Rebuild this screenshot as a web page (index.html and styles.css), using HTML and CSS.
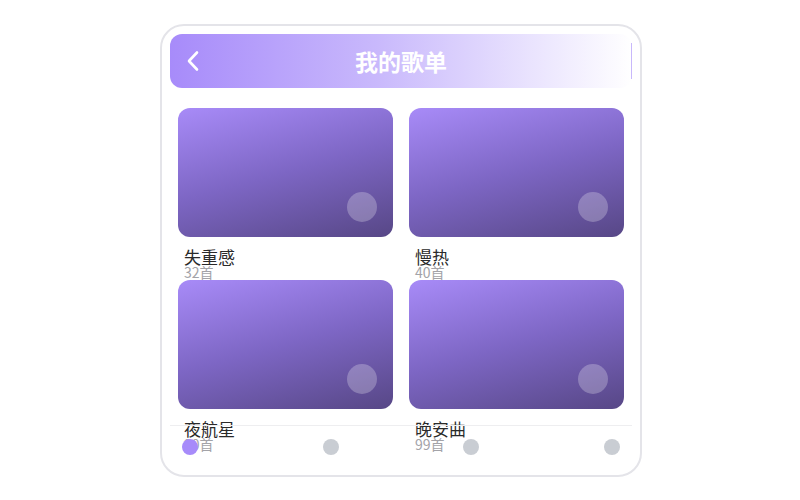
FILE: index.html
```html
<!DOCTYPE html>
<html lang="zh">
<head>
<meta charset="utf-8">
<title>我的歌单</title>
<link rel="stylesheet" href="styles.css">
</head>
<body>
<div class="phone">
  <header class="topbar">
    <span class="back">
      <svg width="14" height="22" viewBox="0 0 14 22"><path d="M11 2.5 L3 11 L11 19.5" fill="none" stroke="#fff" stroke-width="2.6" stroke-linecap="round" stroke-linejoin="round"/></svg>
    </span>
    <h1 class="title">我的歌单</h1>
    <span class="edge"></span>
  </header>
  <main class="list">
    <div class="item">
      <div class="cover"><span class="play"></span></div>
      <div class="name">失重感</div>
      <div class="count">32首</div>
    </div>
    <div class="item">
      <div class="cover"><span class="play"></span></div>
      <div class="name">慢热</div>
      <div class="count">40首</div>
    </div>
    <div class="item">
      <div class="cover"><span class="play"></span></div>
      <div class="name">夜航星</div>
      <div class="count">20首</div>
    </div>
    <div class="item">
      <div class="cover"><span class="play"></span></div>
      <div class="name">晚安曲</div>
      <div class="count">99首</div>
    </div>
  </main>
  <nav class="tabbar">
    <span class="dot active"></span>
    <span class="dot"></span>
    <span class="dot"></span>
    <span class="dot"></span>
  </nav>
</div>
</body>
</html>
```
FILE: styles.css
```css
* { box-sizing: border-box; margin: 0; padding: 0; }
html, body { background: #fff; }
body {
  font-family: "Noto Sans CJK SC", "Noto Sans", sans-serif;
  padding-top: 24px;
}
.phone {
  width: 482px;
  height: 453px;
  margin: 0 0 0 160px;
  border: 2px solid #e4e4e9;
  border-radius: 24px;
  padding: 8px;
  display: flex;
  flex-direction: column;
}
.topbar {
  height: 54px;
  flex: none;
  border-radius: 12px;
  background: linear-gradient(90deg, #a78bfa 0%, #c9b9fc 45%, #ffffff 100%);
  display: flex;
  align-items: center;
  padding: 0 0 0 16px;
  position: relative;
}
.back { display: flex; width: 14px; height: 22px; }
.title {
  position: absolute;
  left: 0; right: 0;
  text-align: center;
  color: #fff;
  font-size: 23px;
  font-weight: 700;
  line-height: 52px;
  pointer-events: none;
}
.edge {
  margin-left: auto;
  width: 1px;
  height: 36px;
  background: #c8b8fb;
}
.list {
  height: 337px;
  flex: none;
  padding: 20px 8px 0;
  display: grid;
  grid-template-columns: 1fr 1fr;
  grid-auto-rows: 156px;
  column-gap: 16px;
  row-gap: 16px;
}
.item { min-height: 0; }
.cover {
  height: 129px;
  border-radius: 12px;
  background: linear-gradient(165deg, #a88bf8 0%, #7d66c4 50%, #574786 100%);
  position: relative;
}
.play {
  position: absolute;
  right: 16px;
  bottom: 15px;
  width: 30px;
  height: 30px;
  border-radius: 50%;
  background: rgba(255,255,255,0.25);
}
.name {
  margin-top: 10px;
  padding-left: 6px;
  font-size: 17px;
  line-height: 20px;
  color: #2a2a2a;
}
.count {
  margin-top: -2px;
  padding-left: 6px;
  font-size: 14px;
  line-height: 15px;
  color: #a3a3a8;
}
.tabbar {
  height: 42px;
  flex: none;
  border-top: 1px solid #eeeef0;
  display: flex;
  align-items: center;
  justify-content: space-between;
  padding: 0 12px;
}
.dot {
  width: 16px;
  height: 16px;
  border-radius: 50%;
  background: #c9cdd3;
}
.dot.active { background: #a78bfa; }
```
